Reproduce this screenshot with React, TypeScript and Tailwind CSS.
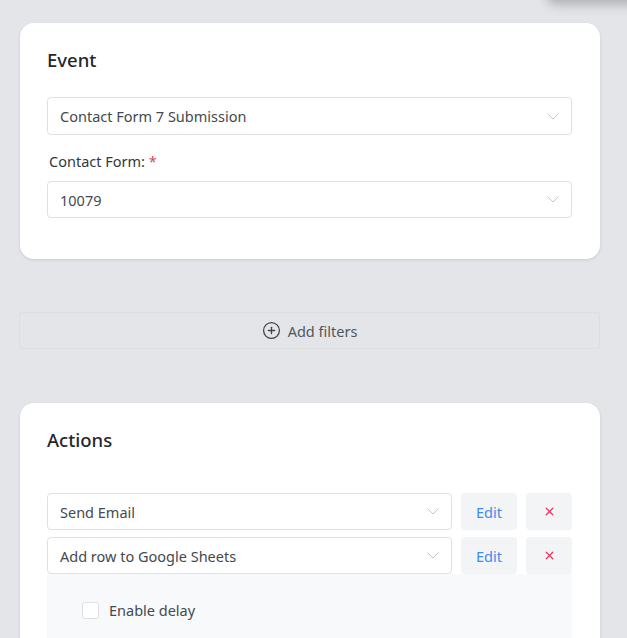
import { CirclePlus, X } from "lucide-react";

const font = "font-['Noto_Sans','Open_Sans',sans-serif]";

function Chevron() {
  return (
    <svg width="12" height="7" viewBox="0 0 12 7" fill="none" className="text-[#c4c6ca]">
      <path d="M0.5 0.5 L6 6 L11.5 0.5" stroke="currentColor" strokeWidth="1" />
    </svg>
  );
}

function SelectBox({ value, h = "h-[38px]" }: { value: string; h?: string }) {
  return (
    <div className={`${h} flex-1 flex items-center justify-between rounded-[4px] border border-[#dfe0e4] bg-white pl-3 pr-3 text-[14.5px] text-[#44494f]`}>
      <span className="translate-y-[0.5px]">{value}</span>
      <Chevron />
    </div>
  );
}

function ActionRow({ value }: { value: string }) {
  return (
    <div className="flex h-[37px]">
      <SelectBox value={value} h="h-[37px]" />
      <button className="ml-[9px] w-[56px] h-[37px] rounded-[4px] bg-[#f3f4f5] text-[14.5px] text-[#3b8df0]">
        <span className="inline-block translate-y-[1px]">Edit</span>
      </button>
      <button className="ml-[9px] w-[46px] h-[37px] rounded-[4px] bg-[#f3f4f5] flex items-center justify-center">
        <X className="w-[13px] h-[13px] text-[#e8345f]" strokeWidth={2.4} />
      </button>
    </div>
  );
}

export default function App() {
  return (
    <div className={`${font} relative h-[638px] overflow-hidden bg-[#e4e5e9] pl-5 pr-[27px] pt-[23px]`}>
      <div className="absolute right-[-20px] top-[-20px] w-[100px] h-[20px] rounded-lg shadow-[0_4px_12px_rgba(0,0,0,0.25)]" />

      <section className="h-[236px] rounded-[14px] bg-white pl-[27px] pr-[28px] pt-[23px] shadow-[0_1px_3px_rgba(0,0,0,0.12)]">
        <h2 className="text-[18.5px] leading-[28px] font-medium text-[#23282d]">Event</h2>
        <div className="mt-[23px] flex">
          <SelectBox value="Contact Form 7 Submission" />
        </div>
        <div className="mt-[16px] ml-[2px] text-[14.5px] leading-[20px] text-[#33383d]">
          Contact Form: <span className="text-[#d6455d]">*</span>
        </div>
        <div className="mt-[10px] flex">
          <SelectBox value="10079" h="h-[37px]" />
        </div>
      </section>

      <div className="mt-[53px] -ml-px h-[37px] flex items-center justify-center gap-[7px] rounded-[3px] border border-[#dddee2] text-[14.5px] text-[#50575e]">
        <CirclePlus className="w-[19px] h-[19px] text-[#3c434a]" strokeWidth={1.6} />
        <span className="translate-y-[0.5px]">Add filters</span>
      </div>

      <section className="mt-[54px] h-[300px] rounded-[14px] bg-white pl-[27px] pr-[28px] pt-[23px] shadow-[0_1px_3px_rgba(0,0,0,0.12)]">
        <h2 className="text-[18.5px] leading-[28px] font-medium text-[#23282d]">Actions</h2>
        <div className="mt-[39px] flex flex-col gap-[7px]">
          <ActionRow value="Send Email" />
          <ActionRow value="Add row to Google Sheets" />
        </div>
        <div className="bg-[#f8f9fb] h-[100px] pl-[35px] pt-[28px] flex items-start gap-[10px]">
          <span className="w-[17px] h-[17px] rounded-[3px] border border-[#dfe0e4] bg-white" />
          <span className="-mt-px text-[14.5px] leading-[18px] text-[#44494f]">Enable delay</span>
        </div>
      </section>
    </div>
  );
}
